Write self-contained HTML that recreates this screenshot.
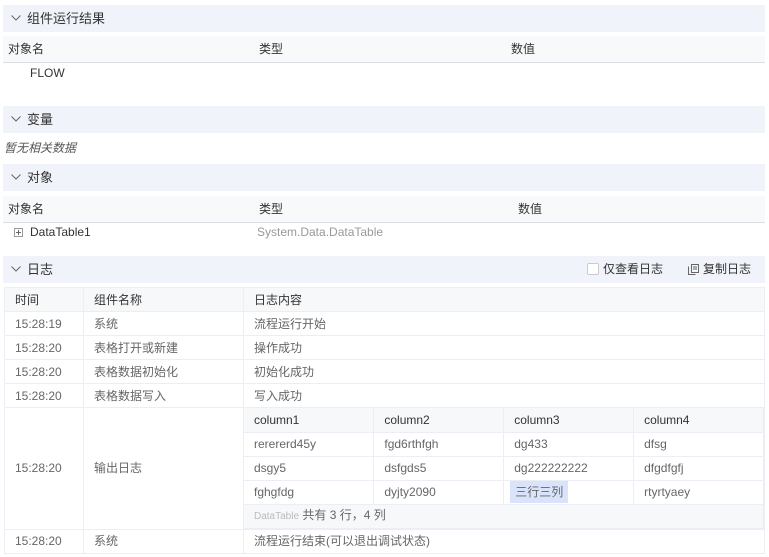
<!DOCTYPE html>
<html><head><meta charset="utf-8"><style>
*{margin:0;padding:0;box-sizing:border-box}
body{width:769px;height:557px;background:#fff;font-family:"Liberation Sans","Noto Sans CJK SC",sans-serif;font-size:12px;color:#333;position:relative;overflow:hidden}
.a{position:absolute}
.hd{position:absolute;left:3px;width:762px;height:27px;background:#f0f3f9;font-size:13px;line-height:27px;padding-left:24px;color:#333}
.hd svg{position:absolute;left:8px;top:10px}
.th{position:absolute;left:3px;width:762px;height:27px;background:#f7f9fa;border-bottom:1px solid #dcdfe6;line-height:27px}
.th span{position:absolute;top:0}
table{border-collapse:collapse;position:absolute;left:4px;top:287px;width:761px;table-layout:fixed}
td{border:1px solid #ebeef5;height:24px;padding:0 10px;color:#666;white-space:nowrap;vertical-align:middle;line-height:14px}
tr.h td{background:#f7f8f9;color:#333}
td.n{padding:0}
table.in{position:static;width:100%;left:0;top:0}
table.in td{border-top:none;border-left:none}
</style></head><body>
<div class="hd" style="top:5px"><svg width="10" height="6"><path d="M0.5 0.5L5 5L9.5 0.5" fill="none" stroke="#666"/></svg>组件运行结果</div>
<div class="th" style="top:36px"><span style="left:5px">对象名</span><span style="left:256px">类型</span><span style="left:508px">数值</span></div>
<div class="a" style="left:30px;top:66px;color:#333">FLOW</div>
<div class="hd" style="top:106px"><svg width="10" height="6"><path d="M0.5 0.5L5 5L9.5 0.5" fill="none" stroke="#666"/></svg>变量</div>
<div class="a" style="left:4px;top:139px;font-style:italic;color:#555">暂无相关数据</div>
<div class="hd" style="top:164px"><svg width="10" height="6"><path d="M0.5 0.5L5 5L9.5 0.5" fill="none" stroke="#666"/></svg>对象</div>
<div class="th" style="top:196px"><span style="left:5px">对象名</span><span style="left:256px">类型</span><span style="left:515px">数值</span></div>
<div class="a" style="left:14px;top:228px;width:9px;height:9px;border:1px solid #999"><div class="a" style="left:1px;top:3px;width:5px;height:1px;background:#666"></div><div class="a" style="left:3px;top:1px;width:1px;height:5px;background:#666"></div></div>
<div class="a" style="left:30px;top:225px;color:#333">DataTable1</div>
<div class="a" style="left:257px;top:225px;color:#999">System.Data.DataTable</div>
<div class="hd" style="top:256px"><svg width="10" height="6"><path d="M0.5 0.5L5 5L9.5 0.5" fill="none" stroke="#666"/></svg>日志
<div class="a" style="left:584px;top:7px;width:12px;height:12px;border:1px solid #ccc;background:#fff;border-radius:2px"></div>
<div class="a" style="left:600px;top:0;font-size:12px">仅查看日志</div>
<svg class="a" style="left:685px;top:8px" width="11" height="11"><rect x="3.5" y="0.5" width="7" height="8" fill="none" stroke="#666"/><path d="M0.5 2.5V10.5H7.5" fill="none" stroke="#666"/><path d="M5 3H9M5 5H9" stroke="#666"/></svg>
<div class="a" style="left:700px;top:0;font-size:12px">复制日志</div>
</div>
<table>
<colgroup><col style="width:79px"><col style="width:160px"><col></colgroup>
<tr class="h"><td>时间</td><td>组件名称</td><td>日志内容</td></tr>
<tr><td>15:28:19</td><td>系统</td><td>流程运行开始</td></tr>
<tr><td>15:28:20</td><td>表格打开或新建</td><td>操作成功</td></tr>
<tr><td>15:28:20</td><td>表格数据初始化</td><td>初始化成功</td></tr>
<tr><td>15:28:20</td><td>表格数据写入</td><td>写入成功</td></tr>
<tr><td>15:28:20</td><td>输出日志</td><td class="n">
<table class="in"><tr class="h"><td>column1</td><td>column2</td><td>column3</td><td>column4</td></tr>
<tr><td>rerererd45y</td><td>fgd6rthfgh</td><td>dg433</td><td>dfsg</td></tr>
<tr><td>dsgy5</td><td>dsfgds5</td><td>dg222222222</td><td>dfgdfgfj</td></tr>
<tr><td>fghgfdg</td><td>dyjty2090</td><td style="padding-left:6px"><span style="background:#d9e4fa;padding:4px 5px">三行三列</span></td><td>rtyrtyaey</td></tr>
<tr><td colspan="4" style="background:#f7f8fa;color:#666"><span style="color:#bbb;font-size:10px">DataTable</span> 共有 3 行，4 列</td></tr>
</table></td></tr>
<tr><td>15:28:20</td><td>系统</td><td>流程运行结束(可以退出调试状态)</td></tr>
</table>
</body></html>
